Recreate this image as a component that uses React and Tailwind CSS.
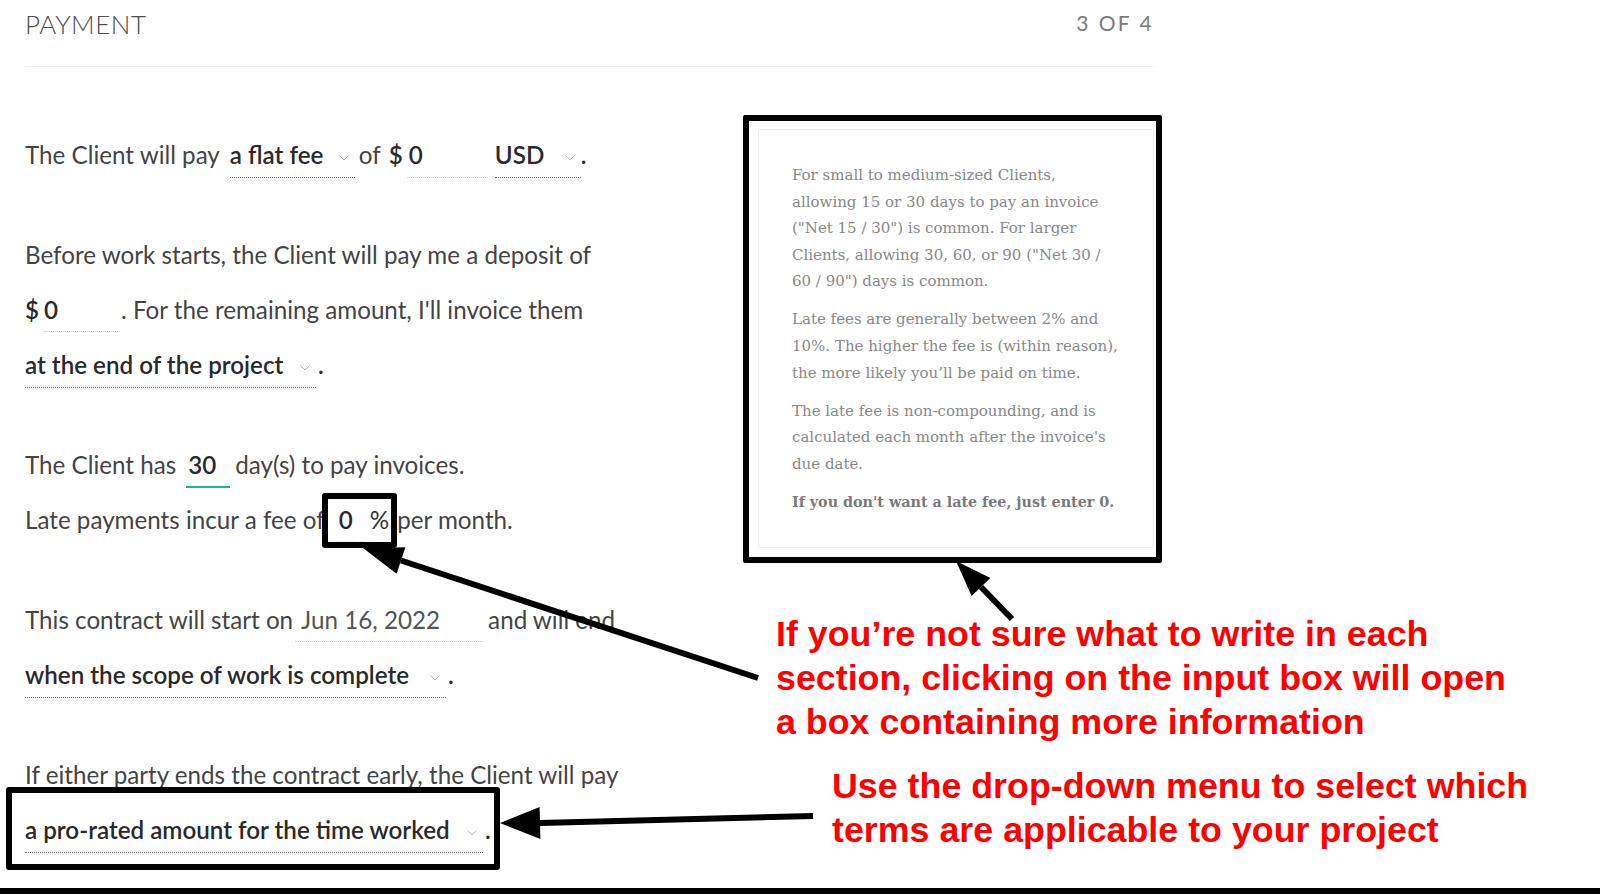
import React from "react";

function Chevron() {
  return (
    <svg width="10" height="6" viewBox="0 0 10 6" className="mt-[5px] shrink-0">
      <path d="M0.5 0.5L5 5L9.5 0.5" fill="none" stroke="#b9b9b9" strokeWidth="1" />
    </svg>
  );
}

function Select({ w, ml, children }) {
  return (
    <span
      className={`inline-flex items-center justify-between pr-[6px] leading-[44px] border-b border-dotted border-[#666] font-semibold text-[#2a2a2a] ${w} ${ml}`}
    >
      <span>{children}</span>
      <Chevron />
    </span>
  );
}

function Line({ children }) {
  return <div className="flex items-baseline h-[55px] leading-[55px] whitespace-nowrap">{children}</div>;
}

export default function App() {
  return (
    <div className="relative w-[1600px] h-[894px] bg-white overflow-hidden flex flex-col font-['Lato',sans-serif] text-[#444]">
      <div className="ml-[25px] w-[1129px] flex-1">
        <header className="flex justify-between items-start pt-[6px] pb-[24px] border-b border-[#edf0f0] leading-[36px]">
          <span className="text-[26px] font-light text-[#4d4d4d] tracking-[0.5px]">PAYMENT</span>
          <span className="text-[21px] tracking-[2.4px] text-[#7a7a7a] mt-[-1px]">3 OF 4</span>
        </header>

        <main className="flex justify-between items-start pt-[60px]">
          <div className="text-[24.2px]">
            <div className="mb-[45px]">
              <Line>
                <span>The Client will pay</span>
                <Select w="w-[125px]" ml="ml-[10px]">a flat fee</Select>
                <span className="ml-[4px]">of</span>
                <span className="ml-[8px] font-semibold text-[#2a2a2a]">$</span>
                <span className="inline-block w-[81px] ml-[4px] pl-[2px] leading-[44px] border-b border-dotted border-[#cfcfcf] font-semibold text-[#2a2a2a]">
                  0
                </span>
                <Select w="w-[86px]" ml="ml-[7px]">USD</Select>
                <span className="font-semibold text-[#2a2a2a]">.</span>
              </Line>
            </div>

            <div className="mb-[45px]">
              <Line>
                <span>Before work starts, the Client will pay me a deposit of</span>
              </Line>
              <Line>
                <span className="font-semibold text-[#2a2a2a]">$</span>
                <span className="inline-block w-[76px] ml-[5px] leading-[42px] border-b border-dotted border-[#cfcfcf] font-semibold text-[#2a2a2a]">
                  0
                </span>
                <span className="ml-[1px]">. For the remaining amount, I'll invoice them</span>
              </Line>
              <Line>
                <Select w="w-[291px]" ml="">at the end of the project</Select>
                <span className="ml-[2px] font-semibold text-[#2a2a2a]">.</span>
              </Line>
            </div>

            <div className="mb-[45px]">
              <Line>
                <span>The Client has</span>
                <span className="inline-block w-[44px] ml-[10px] pl-[2px] leading-[42px] border-b-2 border-[#20b28a] font-semibold text-[#2a2a2a]">
                  30
                </span>
                <span className="ml-[5px]">day(s) to pay invoices.</span>
              </Line>
              <Line>
                <span>Late payments incur a fee of</span>
                <span className="inline-block w-[27px] ml-[11px] pl-[3px] leading-[42px] border-b border-dotted border-[#dddddd] font-semibold text-[#2a2a2a]">
                  0
                </span>
                <span className="ml-[7px] text-[#333]">%</span>
                <span className="ml-[8px]">per month.</span>
              </Line>
            </div>

            <div className="mb-[45px]">
              <Line>
                <span>This contract will start on</span>
                <span className="inline-block w-[188px] ml-[2px] pl-[6px] leading-[42px] border-b border-dotted border-[#cccccc] text-[#555]">
                  Jun 16, 2022
                </span>
                <span className="ml-[5px]">and will end</span>
              </Line>
              <Line>
                <Select w="w-[421px]" ml="">when the scope of work is complete</Select>
                <span className="ml-[2px] font-semibold text-[#2a2a2a]">.</span>
              </Line>
            </div>

            <div>
              <Line>
                <span>If either party ends the contract early, the Client will pay</span>
              </Line>
              <Line>
                <Select w="w-[458px]" ml="">a pro-rated amount for the time worked</Select>
                <span className="ml-[2px] font-semibold text-[#2a2a2a]">.</span>
              </Line>
            </div>
          </div>

          <aside className="mt-[2px] w-[396px] h-[419px] shrink-0 border border-[#ececec] rounded-[3px] pt-[32px] pl-[33px] font-['DejaVu_Serif',serif] text-[15px] leading-[26.6px] text-[#888] whitespace-nowrap">
            <p className="mb-[11.5px]">
              For small to medium-sized Clients,
              <br />
              allowing 15 or 30 days to pay an invoice
              <br />
              ("Net 15 / 30") is common. For larger
              <br />
              Clients, allowing 30, 60, or 90 ("Net 30 /
              <br />
              60 / 90") days is common.
            </p>
            <p className="mb-[11.5px]">
              Late fees are generally between 2% and
              <br />
              10%. The higher the fee is (within reason),
              <br />
              the more likely you’ll be paid on time.
            </p>
            <p className="mb-[11.5px]">
              The late fee is non-compounding, and is
              <br />
              calculated each month after the invoice's
              <br />
              due date.
            </p>
            <p className="font-bold text-[14.3px] text-[#7a7a7a]">If you don't want a late fee, just enter 0.</p>
          </aside>
        </main>
      </div>

      <div className="h-[6px] bg-black shrink-0" />

      {/* annotation overlays */}
      <div className="absolute left-[322px] top-[493px] w-[75px] h-[55px] border-[6px] border-black rounded-[3px]" />
      <div className="absolute left-[6px] top-[787px] w-[494px] h-[83px] border-[6px] border-black rounded-[3px]" />
      <div className="absolute left-[743px] top-[115px] w-[419px] h-[448px] border-[6px] border-black rounded-[2px]" />

      <svg className="absolute left-0 top-0 pointer-events-none" width="1600" height="894" viewBox="0 0 1600 894">
        <line x1="758" y1="678" x2="401" y2="560.5" stroke="black" strokeWidth="6" />
        <polygon points="363,548 405.4,547.2 396.6,573.8" fill="black" />
        <line x1="1012" y1="619" x2="981" y2="587" stroke="black" strokeWidth="6" />
        <polygon points="956,561 990.4,578 971.6,596" fill="black" />
        <line x1="813" y1="816" x2="540" y2="823" stroke="black" strokeWidth="6" />
        <polygon points="500,823 540.4,839 539.6,807" fill="black" />
      </svg>

      <div className="absolute left-[776px] top-[612px] font-['Liberation_Sans',Arial,sans-serif] font-bold text-[35.8px] leading-[44px] text-[#ff0000] whitespace-nowrap">
        <div>If you’re not sure what to write in each</div>
        <div>section, clicking on the input box will open</div>
        <div>a box containing more information</div>
      </div>
      <div className="absolute left-[832px] top-[764px] font-['Liberation_Sans',Arial,sans-serif] font-bold text-[35.8px] leading-[44px] text-[#ff0000] whitespace-nowrap">
        <div>Use the drop-down menu to select which</div>
        <div>terms are applicable to your project</div>
      </div>
    </div>
  );
}
